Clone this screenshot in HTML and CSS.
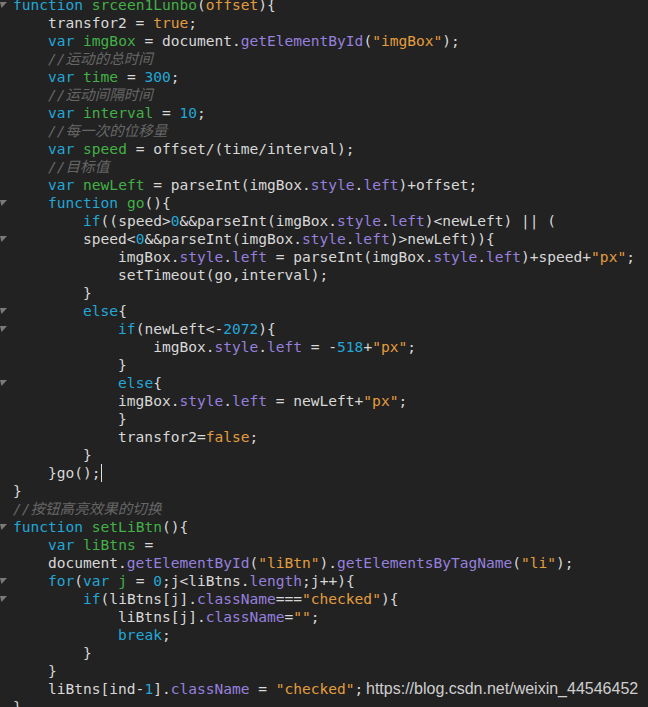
FILE: index.html
```html
<!DOCTYPE html>
<html lang="zh">
<head>
<meta charset="utf-8">
<title>code</title>
<link rel="stylesheet" href="styles.css">
</head>
<body>
<div class="editor">
  <div class="code">
    <div class="ln"><span class="gut"><svg class="fold" viewBox="0 0 7 6" width="7" height="6"><polygon points="0,0 7,0 1.5,6"/></svg></span><span class="t"><span class="k">function</span> <span class="g">srceen1Lunbo</span>(<span class="s">offset</span>){</span></div>
    <div class="ln"><span class="gut"></span><span class="t">    transfor2 = <span class="s">true</span>;</span></div>
    <div class="ln"><span class="gut"></span><span class="t">    <span class="k">var</span> <span class="g">imgBox</span> = document.<span class="p">getElementById</span>(<span class="s">"imgBox"</span>);</span></div>
    <div class="ln"><span class="gut"></span><span class="t">    <span class="c">//运动的总时间</span></span></div>
    <div class="ln"><span class="gut"></span><span class="t">    <span class="k">var</span> <span class="g">time</span> = <span class="n">300</span>;</span></div>
    <div class="ln"><span class="gut"></span><span class="t">    <span class="c">//运动间隔时间</span></span></div>
    <div class="ln"><span class="gut"></span><span class="t">    <span class="k">var</span> <span class="g">interval</span> = <span class="n">10</span>;</span></div>
    <div class="ln"><span class="gut"></span><span class="t">    <span class="c">//每一次的位移量</span></span></div>
    <div class="ln"><span class="gut"></span><span class="t">    <span class="k">var</span> <span class="g">speed</span> = offset/(time/interval);</span></div>
    <div class="ln"><span class="gut"></span><span class="t">    <span class="c">//目标值</span></span></div>
    <div class="ln"><span class="gut"></span><span class="t">    <span class="k">var</span> <span class="g">newLeft</span> = parseInt(imgBox.<span class="p">style</span>.<span class="p">left</span>)+offset;</span></div>
    <div class="ln"><span class="gut"><svg class="fold" viewBox="0 0 7 6" width="7" height="6"><polygon points="0,0 7,0 1.5,6"/></svg></span><span class="t">    <span class="k">function</span> <span class="g">go</span>(){</span></div>
    <div class="ln"><span class="gut"></span><span class="t">        <span class="k">if</span>((speed&gt;<span class="n">0</span>&amp;&amp;parseInt(imgBox.<span class="p">style</span>.<span class="p">left</span>)&lt;newLeft) || (</span></div>
    <div class="ln"><span class="gut"><svg class="fold" viewBox="0 0 7 6" width="7" height="6"><polygon points="0,0 7,0 1.5,6"/></svg></span><span class="t">        speed&lt;<span class="n">0</span>&amp;&amp;parseInt(imgBox.<span class="p">style</span>.<span class="p">left</span>)&gt;newLeft)){</span></div>
    <div class="ln"><span class="gut"></span><span class="t">            imgBox.<span class="p">style</span>.<span class="p">left</span> = parseInt(imgBox.<span class="p">style</span>.<span class="p">left</span>)+speed+<span class="s">"px"</span>;</span></div>
    <div class="ln"><span class="gut"></span><span class="t">            setTimeout(go,interval);</span></div>
    <div class="ln"><span class="gut"></span><span class="t">        }</span></div>
    <div class="ln"><span class="gut"><svg class="fold" viewBox="0 0 7 6" width="7" height="6"><polygon points="0,0 7,0 1.5,6"/></svg></span><span class="t">        <span class="k">else</span>{</span></div>
    <div class="ln"><span class="gut"><svg class="fold" viewBox="0 0 7 6" width="7" height="6"><polygon points="0,0 7,0 1.5,6"/></svg></span><span class="t">            <span class="k">if</span>(newLeft&lt;-<span class="n">2072</span>){</span></div>
    <div class="ln"><span class="gut"></span><span class="t">                imgBox.<span class="p">style</span>.<span class="p">left</span> = -<span class="n">518</span>+<span class="s">"px"</span>;</span></div>
    <div class="ln"><span class="gut"></span><span class="t">            }</span></div>
    <div class="ln"><span class="gut"><svg class="fold" viewBox="0 0 7 6" width="7" height="6"><polygon points="0,0 7,0 1.5,6"/></svg></span><span class="t">            <span class="k">else</span>{</span></div>
    <div class="ln"><span class="gut"></span><span class="t">            imgBox.<span class="p">style</span>.<span class="p">left</span> = newLeft+<span class="s">"px"</span>;</span></div>
    <div class="ln"><span class="gut"></span><span class="t">            }</span></div>
    <div class="ln"><span class="gut"></span><span class="t">            transfor2=<span class="s">false</span>;</span></div>
    <div class="ln"><span class="gut"></span><span class="t">        }</span></div>
    <div class="ln"><span class="gut"></span><span class="t">    }go();<span class="cursor"></span></span></div>
    <div class="ln"><span class="gut"></span><span class="t">}</span></div>
    <div class="ln"><span class="gut"></span><span class="t"><span class="c">//按钮高亮效果的切换</span></span></div>
    <div class="ln"><span class="gut"><svg class="fold" viewBox="0 0 7 6" width="7" height="6"><polygon points="0,0 7,0 1.5,6"/></svg></span><span class="t"><span class="k">function</span> <span class="g">setLiBtn</span>(){</span></div>
    <div class="ln"><span class="gut"></span><span class="t">    <span class="k">var</span> <span class="g">liBtns</span> =</span></div>
    <div class="ln"><span class="gut"></span><span class="t">    document.<span class="p">getElementById</span>(<span class="s">"liBtn"</span>).<span class="p">getElementsByTagName</span>(<span class="s">"li"</span>);</span></div>
    <div class="ln"><span class="gut"><svg class="fold" viewBox="0 0 7 6" width="7" height="6"><polygon points="0,0 7,0 1.5,6"/></svg></span><span class="t">    <span class="k">for</span>(<span class="k">var</span> <span class="g">j</span> = <span class="n">0</span>;j&lt;liBtns.<span class="p">length</span>;j++){</span></div>
    <div class="ln"><span class="gut"><svg class="fold" viewBox="0 0 7 6" width="7" height="6"><polygon points="0,0 7,0 1.5,6"/></svg></span><span class="t">        <span class="k">if</span>(liBtns[j].<span class="p">className</span>===<span class="s">"checked"</span>){</span></div>
    <div class="ln"><span class="gut"></span><span class="t">            liBtns[j].<span class="p">className</span>=<span class="s">""</span>;</span></div>
    <div class="ln"><span class="gut"></span><span class="t">            <span class="k">break</span>;</span></div>
    <div class="ln"><span class="gut"></span><span class="t">        }</span></div>
    <div class="ln"><span class="gut"></span><span class="t">    }</span></div>
    <div class="ln"><span class="gut"></span><span class="t">    liBtns[ind-<span class="n">1</span>].<span class="p">className</span> = <span class="s">"checked"</span>;</span></div>
    <div class="ln"><span class="gut"></span><span class="t">}</span></div>
  </div>
  <div class="watermark">https://blog.csdn.net/weixin_44546452</div>
</div>
</body>
</html>
```
FILE: styles.css
```css
html, body {
  margin: 0;
  padding: 0;
  background: #222222;
  height: 100%;
  overflow: hidden;
}
.editor {
  position: relative;
  height: 707px;
  background: #222222;
  overflow: hidden;
}
.code {
  margin-top: -4px;
  font-family: "DejaVu Sans Mono", "Noto Sans CJK SC", monospace;
  font-size: 14.55px;
  color: #d8d8d8;
}
.ln {
  display: flex;
  height: 18px;
  line-height: 18px;
  white-space: pre;
}
.gut {
  width: 13px;
  flex: none;
  display: flex;
  align-items: center;
}
.fold {
  display: block;
  fill: #7a7a7a;
}
.t { white-space: pre; }
.k { color: #22a7d6; }
.g { color: #43b047; }
.s { color: #e29d3e; }
.n { color: #22a7d6; }
.p { color: #9680df; }
.c {
  color: #666666;
  font-style: italic;
  font-family: "DejaVu Sans Mono", "Noto Sans CJK SC", monospace;
}
.cursor {
  display: inline-block;
  width: 1px;
  height: 18px;
  background: #e0e0e0;
  vertical-align: top;
}
.watermark {
  position: absolute;
  left: 366px;
  top: 680px;
  font-family: "Liberation Sans", Arial, sans-serif;
  font-size: 16px;
  line-height: 18px;
  color: #cfcfcf;
}
```
